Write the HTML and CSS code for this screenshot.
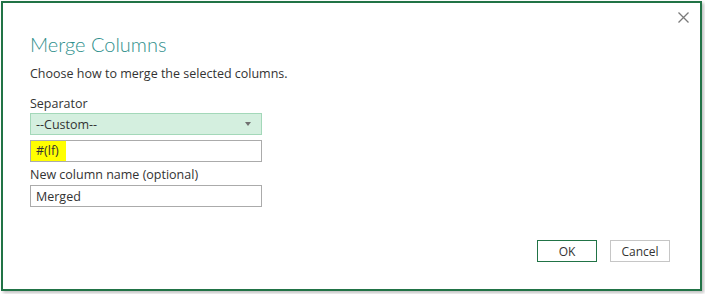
FILE: index.html
```html
<!DOCTYPE html>
<html lang="en">
<head>
    <meta charset="UTF-8">
    <title>Merge Columns</title>
    <link rel="stylesheet" href="styles.css">
</head>
<body>
    <div class="dialog">
        <button class="close" type="button" aria-label="Close">
            <svg width="11" height="11" viewBox="0 0 11 11">
                <path d="M0.5 0.5 L10.5 10.5 M10.5 0.5 L0.5 10.5" stroke="#7a7a7a" stroke-width="1.3" fill="none"/>
            </svg>
        </button>
        <h1 class="title">Merge Columns</h1>
        <p class="intro">Choose how to merge the selected columns.</p>

        <div class="fields">
            <label class="label">Separator</label>
            <div class="select">
                <span>--Custom--</span>
                <span class="caret"></span>
            </div>
            <div class="input input-sep"><span class="mark">#(lf)</span></div>
            <label class="label">New column name (optional)</label>
            <div class="input">Merged</div>
        </div>

        <div class="footer">
            <button class="btn btn-ok" type="button">OK</button>
            <button class="btn" type="button">Cancel</button>
        </div>
    </div>
</body>
</html>
```

FILE: styles.css
```css
* {
    margin: 0;
    padding: 0;
    box-sizing: border-box;
}

body {
    font-family: "Open Sans", Arial, sans-serif;
    background-color: #ffffff;
    color: #333333;
    width: 705px;
    height: 294px;
    overflow: hidden;
}

.dialog {
    position: relative;
    margin: 1px 0 0 1px;
    width: 701px;
    height: 290px;
    border: 2px solid #217346;
    background-color: #fff;
    box-shadow: 2px 2px 3px rgba(0, 0, 0, 0.25);
    padding: 29px 30px 0 27px;
}

.close {
    position: absolute;
    top: 9px;
    right: 11px;
    width: 11px;
    height: 11px;
    border: none;
    background: none;
}

.close svg {
    display: block;
}

.title {
    font-family: Lato, "Open Sans", sans-serif;
    font-weight: 300;
    font-size: 20px;
    line-height: 24px;
    color: #2f8f8c;
}

.intro {
    font-size: 12.5px;
    line-height: 16px;
    margin-top: 10px;
    color: #333;
}

.fields {
    display: flex;
    flex-direction: column;
    width: 232px;
    margin-top: 14px;
}

.label {
    font-size: 12.5px;
    line-height: 16px;
    color: #333;
}

.select {
    display: flex;
    align-items: center;
    justify-content: space-between;
    height: 22px;
    margin-top: 1px;
    padding: 0 10px 0 5px;
    background-color: #d4efdf;
    border: 1px solid #a3d8b9;
    font-size: 12.5px;
}

.caret {
    width: 0;
    height: 0;
    border-left: 3.5px solid transparent;
    border-right: 3.5px solid transparent;
    border-top: 4px solid #707070;
}

.input {
    display: flex;
    align-items: center;
    height: 22px;
    margin-top: 2px;
    padding: 0 5px;
    border: 1px solid #ababab;
    font-size: 12.5px;
}

.input-sep {
    margin-top: 5px;
    margin-bottom: 5px;
}

.mark {
    background-color: #ffff00;
    margin-left: -5px;
    padding: 1px 7px 1px 5px;
    line-height: 18px;
}

.footer {
    display: flex;
    justify-content: flex-end;
    gap: 13px;
    margin-top: 33px;
}

.btn {
    width: 60px;
    height: 22px;
    border: 1px solid #c6c6c6;
    background-color: #fff;
    font-family: "Open Sans", Arial, sans-serif;
    font-size: 12px;
    color: #333;
}

.btn-ok {
    border-color: #217346;
}
```
